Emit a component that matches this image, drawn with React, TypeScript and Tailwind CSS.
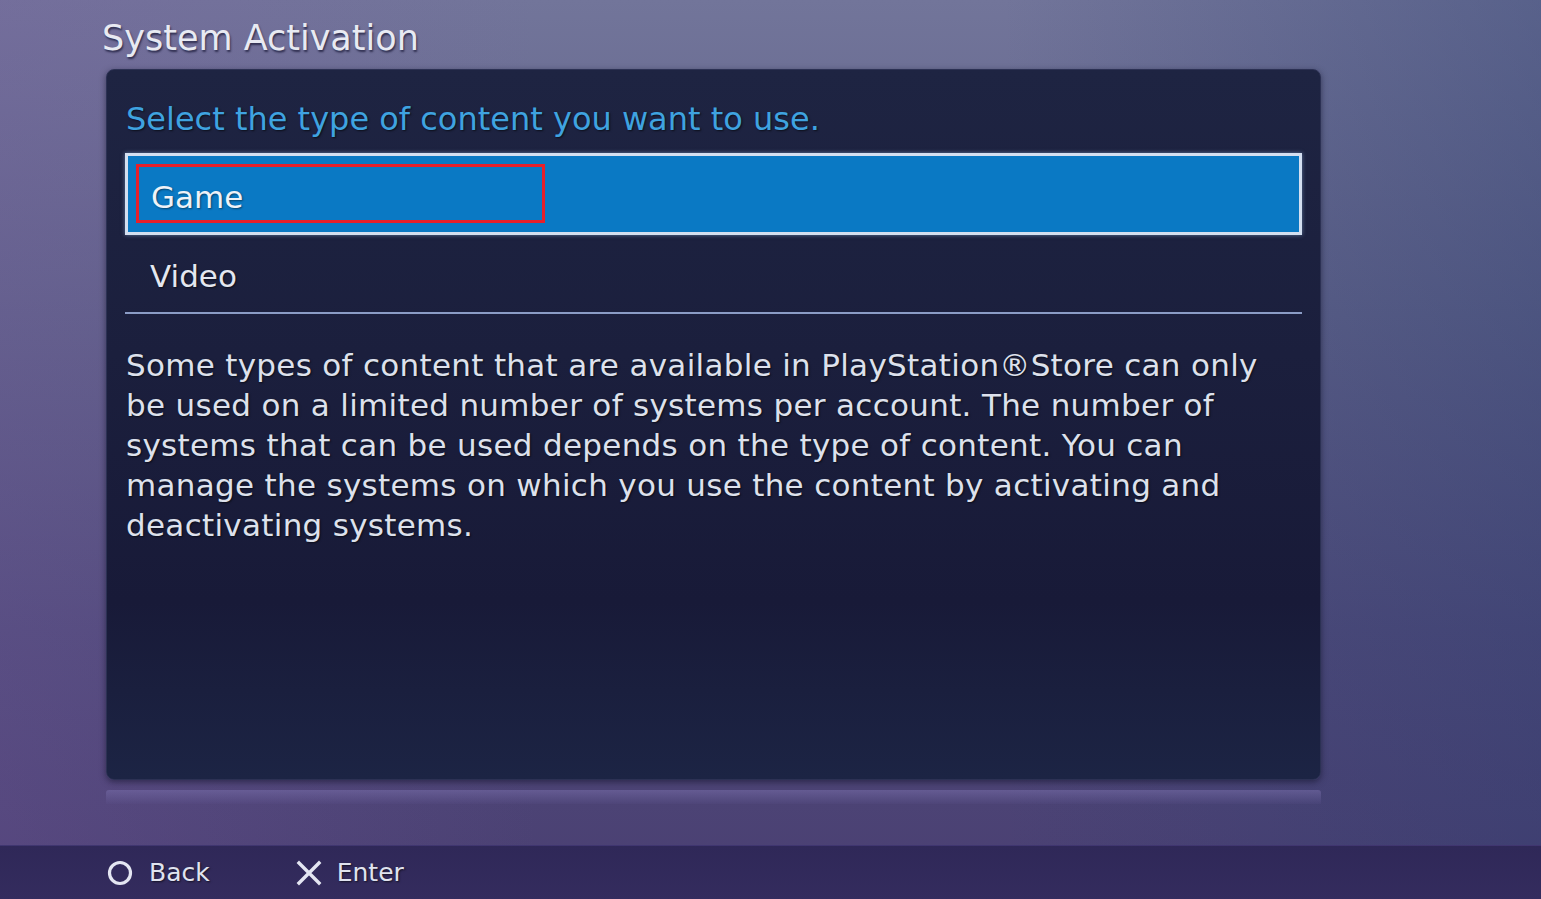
import React from "react";

const font = { fontFamily: '"DejaVu Sans", "Open Sans", sans-serif' };

const CircleIcon: React.FC = () => (
  <svg width="26" height="26" viewBox="0 0 26 26" className="shrink-0">
    <circle cx="13" cy="13" r="10.5" fill="none" stroke="#e4e6f2" strokeWidth="3.2" />
  </svg>
);

const CrossIcon: React.FC = () => (
  <svg width="26" height="26" viewBox="0 0 26 26" className="shrink-0">
    <path d="M3 3 L23 23 M23 3 L3 23" stroke="#e4e6f2" strokeWidth="3.4" strokeLinecap="square" />
  </svg>
);

const lines = [
  "Some types of content that are available in PlayStation®Store can only",
  "be used on a limited number of systems per account. The number of",
  "systems that can be used depends on the type of content. You can",
  "manage the systems on which you use the content by activating and",
  "deactivating systems.",
];

const App: React.FC = () => {
  return (
    <div
      style={font}
      className="relative w-[1541px] h-[899px] overflow-hidden flex flex-col bg-[linear-gradient(90deg,rgba(120,90,160,0.25)_0%,rgba(0,0,0,0)_35%,rgba(0,0,0,0)_65%,rgba(40,60,110,0.35)_100%),linear-gradient(180deg,#72759a_0%,#5f6189_35%,#4f4a7a_70%,#4a3f72_100%)]"
    >
      <h1 className="pl-[102px] pt-[13px] h-[69px] text-[35px] leading-[50px] text-[#e8eaf2] [text-shadow:1px_2px_2px_rgba(20,20,50,0.7)]">
        System Activation
      </h1>

      <div className="ml-[106px] w-[1215px] h-[711px] rounded-[8px] border border-[#2c3154] bg-[linear-gradient(180deg,#1e2442_0%,#1b1f3d_40%,#181a38_75%,#1c2444_100%)] shadow-[0_2px_6px_rgba(10,10,30,0.5)] pl-[18px] pr-[18px] flex flex-col">
        <div className="h-[83px] pt-[27px] text-[32px] leading-[44px] text-[#3fa3e0] [text-shadow:1px_1px_2px_rgba(0,0,0,0.6)] pl-[1px]">
          Select the type of content you want to use.
        </div>

        <div className="h-[82px] border-[3px] border-[#d4dff0] bg-[#0a79c4] shadow-[0_0_4px_rgba(160,200,240,0.5)] flex items-center pl-[8px]">
          <div className="w-[409px] h-[59px] border-[3px] border-[#e8202a] flex items-center pl-[12px] mt-[-2px]">
            <span className="text-[31px] leading-[40px] pt-[7px] text-[#eef2f8] [text-shadow:1px_1px_2px_rgba(0,0,0,0.45)]">Game</span>
          </div>
        </div>

        <div className="h-[79px] flex items-center pl-[25px] border-b-2 border-[#8b9cc6]">
          <span className="text-[31px] leading-[40px] pt-[5px] text-[#e4e7f0] [text-shadow:1px_1px_2px_rgba(0,0,0,0.6)]">Video</span>
        </div>

        <div className="pt-[31px] text-[31px] leading-[40px] tracking-[0.3px] text-[#dde1ec] [text-shadow:1px_1px_2px_rgba(0,0,0,0.6)] pl-[1px]">
          {lines.map((l) => (
            <div key={l} className="whitespace-nowrap">{l}</div>
          ))}
        </div>
      </div>

      <div className="ml-[106px] w-[1215px] h-[14px] mt-[10px] bg-[linear-gradient(180deg,rgba(120,110,170,0.55),rgba(90,80,140,0.15))] rounded-t-[3px]" />

      <div className="flex-1" />

      <div className="h-[54px] bg-[linear-gradient(180deg,#2f2858_0%,#342c5e_100%)] border-t border-[#403670] flex items-center pl-[107px]">
        <div className="flex items-center gap-[16px]">
          <CircleIcon />
          <span className="text-[25px] text-[#e0e3ef] [text-shadow:1px_1px_2px_rgba(0,0,0,0.6)]">Back</span>
        </div>
        <div className="flex items-center gap-[15px] ml-[86px]">
          <CrossIcon />
          <span className="text-[25px] text-[#e0e3ef] [text-shadow:1px_1px_2px_rgba(0,0,0,0.6)]">Enter</span>
        </div>
      </div>
    </div>
  );
};

export default App;
